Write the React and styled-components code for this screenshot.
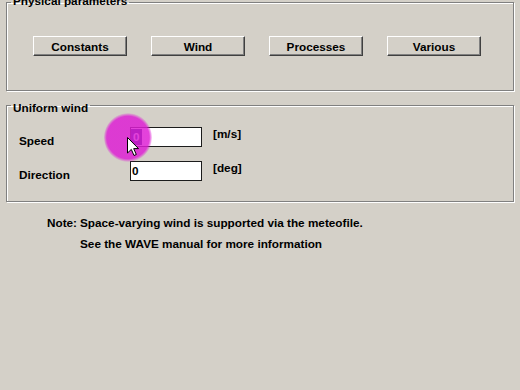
import React from "react";
import styled, { createGlobalStyle } from "styled-components";

const GlobalStyle = createGlobalStyle`
  html, body {
    margin: 0;
    padding: 0;
    background: #d4d0c8;
    overflow: hidden;
  }
  body {
    font-family: "Liberation Sans", Arial, sans-serif;
    font-size: 11.75px;
    font-weight: bold;
    color: #000;
  }
`;

const Page = styled.div`
  position: relative;
  width: 520px;
  height: 390px;
  padding: 0 6px;
  box-sizing: border-box;
  overflow: hidden;
`;

const Group = styled.fieldset`
  margin: ${(p) => p.$top}px 0 0;
  padding: ${(p) => p.$pad};
  width: 508px;
  min-inline-size: 0;
  box-sizing: border-box;
  border: 1px solid #808080;
  box-shadow: 1px 1px 0 #fff, inset 1px 1px 0 #fff;
`;

const Legend = styled.legend`
  margin-left: 0;
  padding: ${(p) => p.$pad};
  line-height: 14px;
`;

const ButtonRow = styled.div`
  display: flex;
  gap: 24px;
  padding-left: 22px;
`;

const Button = styled.button`
  width: 94px;
  height: 20px;
  padding: 0;
  font: inherit;
  color: #000;
  background: #d4d0c8;
  border: 1px solid;
  border-color: #fff #404040 #404040 #fff;
  box-shadow: inset -1px -1px 0 #808080;
  box-sizing: border-box;
  cursor: pointer;
`;

const FieldGrid = styled.div`
  display: grid;
  grid-template-columns: 111px 72px auto;
  row-gap: 14px;
  align-items: start;
  padding-left: 8px;
`;

const FieldLabel = styled.div`
  padding-top: 7px;
  line-height: 13px;
`;

const Input = styled.div`
  height: 20px;
  box-sizing: border-box;
  border: 1px solid #1c1c1c;
  background: #fff;
  padding: 2px 0 0 1px;
  line-height: 14px;
`;

const Selected = styled.span`
  display: inline-block;
  background: #0a246a;
  color: #fff;
  padding: 0 1px;
  outline: 1px solid #0a246a;
`;

const Unit = styled.div`
  margin-left: 11px;
  line-height: 14px;
`;

const Note = styled.div`
  margin: 14px 0 0 41px;
  display: grid;
  grid-template-columns: auto auto;
  justify-content: start;
  column-gap: 3px;
  row-gap: 7px;
  line-height: 14px;
`;

const Spot = styled.div`
  position: absolute;
  left: 104px;
  top: 113px;
  width: 48px;
  height: 49px;
  border-radius: 50%;
  background: radial-gradient(
    circle,
    rgba(222, 30, 212, 0.84) 0%,
    rgba(222, 30, 212, 0.84) 62%,
    rgba(222, 30, 212, 0) 72%
  );
  pointer-events: none;
`;

const Cursor = styled.svg`
  position: absolute;
  left: 127px;
  top: 137px;
`;

export default function App() {
  return (
    <Page>
      <GlobalStyle />
      <Group $top={-6} $pad="26px 0 34px 4px">
        <Legend $pad="0 2px 2px">Physical parameters</Legend>
        <ButtonRow>
          <Button>Constants</Button>
          <Button>Wind</Button>
          <Button>Processes</Button>
          <Button>Various</Button>
        </ButtonRow>
      </Group>

      <Group $top={4} $pad="12px 0 20px 4px">
        <Legend $pad="6px 2px 0">Uniform wind</Legend>
        <FieldGrid>
          <FieldLabel>Speed</FieldLabel>
          <Input>
            <Selected>0</Selected>
          </Input>
          <Unit>[m/s]</Unit>
          <FieldLabel>Direction</FieldLabel>
          <Input>0</Input>
          <Unit>[deg]</Unit>
        </FieldGrid>
      </Group>

      <Note>
        <span>Note:</span>
        <span>Space-varying wind is supported via the meteofile.</span>
        <span />
        <span>See the WAVE manual for more information</span>
      </Note>

      <Spot />
      <Cursor width="13" height="20" viewBox="0 0 13 20">
        <path
          d="M0.5 0.5 L0.5 16 L4.3 12.4 L7 18.5 L9.3 17.5 L6.7 11.6 L11.5 11.6 Z"
          fill="#fff"
          stroke="#000"
          strokeWidth="1"
          strokeLinejoin="miter"
        />
      </Cursor>
    </Page>
  );
}
